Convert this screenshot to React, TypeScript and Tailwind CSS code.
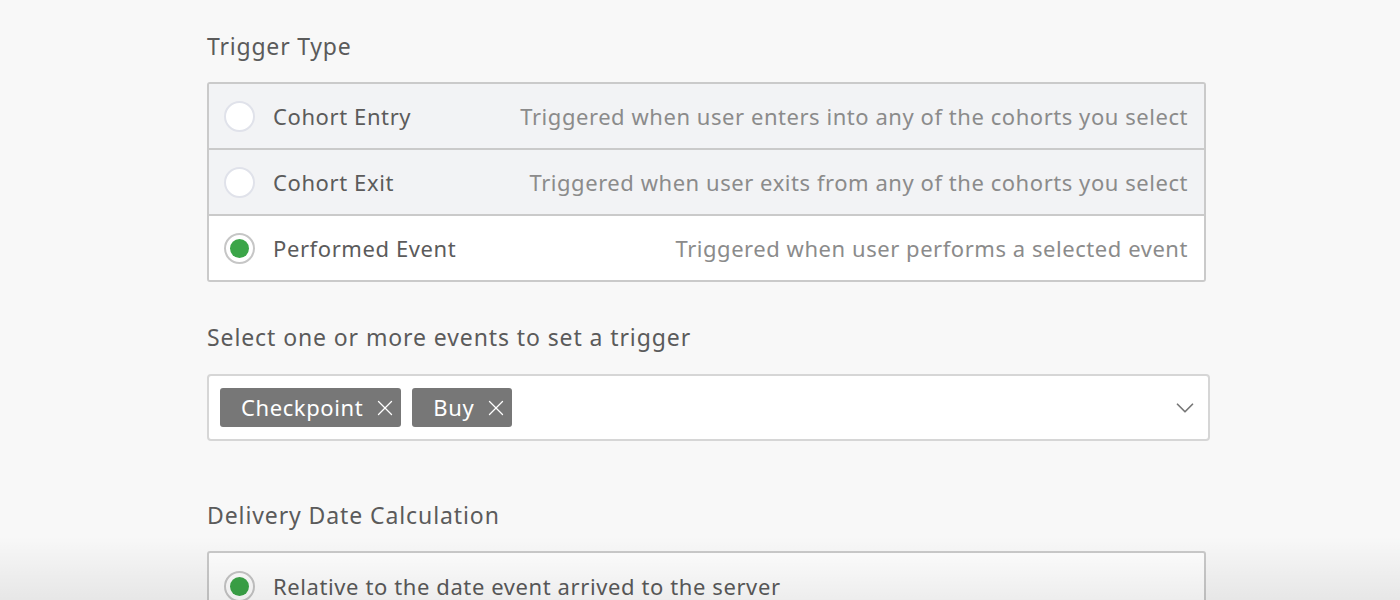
import { ChevronDown, X } from "lucide-react";

const triggers = [
  { label: "Cohort Entry", hint: "Triggered when user enters into any of the cohorts you select", on: false },
  { label: "Cohort Exit", hint: "Triggered when user exits from any of the cohorts you select", on: false },
  { label: "Performed Event", hint: "Triggered when user performs a selected event", on: true },
];

function Radio({ on }: { on: boolean }) {
  return on ? (
    <span className="w-[31px] h-[31px] rounded-full border-2 border-[#c6c6c6] bg-white flex items-center justify-center shrink-0">
      <span className="w-[19px] h-[19px] rounded-full bg-[#3ba548]" />
    </span>
  ) : (
    <span className="w-[31px] h-[31px] rounded-full border-2 border-[#e0e2ea] bg-white shrink-0" />
  );
}

export default function App() {
  return (
    <main
      className="relative h-[600px] overflow-hidden bg-[#f8f8f8] text-[#5b5b5b]"
      style={{ fontFamily: '"Noto Sans", sans-serif' }}
    >
      <div className="ml-[207px] w-[1003px] pt-[29px]">
        <h2 className="text-[23px] leading-[34px] tracking-[0.8px]">Trigger Type</h2>
        <div className="mt-[19px] w-[999px] rounded-[3px] border-2 border-[#cacaca] overflow-hidden">
          {triggers.map((t, i) => (
            <div
              key={t.label}
              className={`flex items-center pl-[15px] pr-[16px] ${i > 0 ? "h-[66px] border-t-2 border-[#cacaca]" : "h-[64px]"} ${t.on ? "bg-white" : "bg-[#f2f3f5]"}`}
            >
              <Radio on={t.on} />
              <span className="ml-[18px] text-[22px] tracking-[0.6px]">{t.label}</span>
              <span className="ml-auto text-[22px] tracking-[0.55px] text-[#8b8b8b]">{t.hint}</span>
            </div>
          ))}
        </div>

        <h2 className="mt-[38px] text-[23px] leading-[34px] tracking-[0.9px]">Select one or more events to set a trigger</h2>
        <div className="mt-[20px] h-[67px] rounded-[4px] border-2 border-[#d6d6d6] bg-white flex items-center pl-[11px] pr-[8px]">
          <div className="flex gap-[11px]">
            {["Checkpoint", "Buy"].map((c) => (
              <span
                key={c}
                className="h-[39px] rounded-[3px] bg-[#777777] text-white text-[22px] tracking-[0.6px] flex items-center pl-[21px] pr-[3px]"
              >
                {c}
                <X size={26} strokeWidth={1.2} className="ml-[9px]" />
              </span>
            ))}
          </div>
          <ChevronDown size={30} strokeWidth={1.4} className="ml-auto text-[#777777]" />
        </div>

        <h2 className="mt-[57px] text-[23px] leading-[34px] tracking-[0.9px]">Delivery Date Calculation</h2>
        <div className="mt-[19px] w-[999px] rounded-[3px] border-2 border-[#cacaca] bg-white">
          <div className="h-[66px] flex items-center pl-[15px]">
            <Radio on />
            <span className="ml-[18px] text-[22px] tracking-[0.6px]">Relative to the date event arrived to the server</span>
          </div>
        </div>
      </div>
      <div className="pointer-events-none absolute inset-x-0 bottom-0 h-[64px] bg-gradient-to-b from-transparent to-black/[0.07]" />
    </main>
  );
}
